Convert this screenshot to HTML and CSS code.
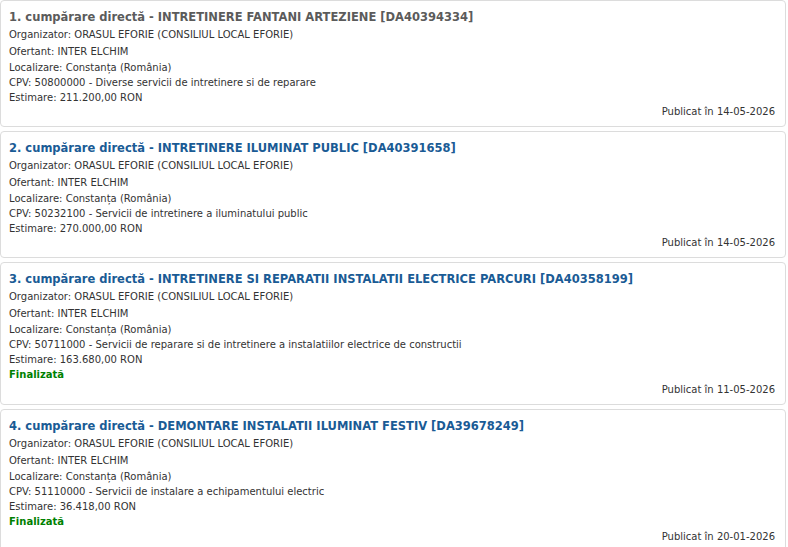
FILE: index.html
```html
<!DOCTYPE html>
<html lang="ro">
<head>
<meta charset="utf-8">
<title>Achiziții directe</title>
<link rel="stylesheet" href="styles.css">
</head>
<body>
<div class="results">
  <div class="item">
    <a class="item-title visited" href="#">1. cumpărare directă - INTRETINERE FANTANI ARTEZIENE [DA40394334]</a>
    <div class="line tall">Organizator: ORASUL EFORIE (CONSILIUL LOCAL EFORIE)</div>
    <div class="line tall">Ofertant: INTER ELCHIM</div>
    <div class="line">Localizare: Constanța (România)</div>
    <div class="line">CPV: 50800000 - Diverse servicii de intretinere si de reparare</div>
    <div class="line">Estimare: 211.200,00 RON</div>
    <div class="line date">Publicat în 14-05-2026</div>
  </div>
  <div class="item">
    <a class="item-title" href="#">2. cumpărare directă - INTRETINERE ILUMINAT PUBLIC [DA40391658]</a>
    <div class="line tall">Organizator: ORASUL EFORIE (CONSILIUL LOCAL EFORIE)</div>
    <div class="line tall">Ofertant: INTER ELCHIM</div>
    <div class="line">Localizare: Constanța (România)</div>
    <div class="line">CPV: 50232100 - Servicii de intretinere a iluminatului public</div>
    <div class="line">Estimare: 270.000,00 RON</div>
    <div class="line date">Publicat în 14-05-2026</div>
  </div>
  <div class="item">
    <a class="item-title" href="#">3. cumpărare directă - INTRETINERE SI REPARATII INSTALATII ELECTRICE PARCURI [DA40358199]</a>
    <div class="line tall">Organizator: ORASUL EFORIE (CONSILIUL LOCAL EFORIE)</div>
    <div class="line tall">Ofertant: INTER ELCHIM</div>
    <div class="line">Localizare: Constanța (România)</div>
    <div class="line">CPV: 50711000 - Servicii de reparare si de intretinere a instalatiilor electrice de constructii</div>
    <div class="line">Estimare: 163.680,00 RON</div>
    <div class="line status">Finalizată</div>
    <div class="line date">Publicat în 11-05-2026</div>
  </div>
  <div class="item">
    <a class="item-title" href="#">4. cumpărare directă - DEMONTARE INSTALATII ILUMINAT FESTIV [DA39678249]</a>
    <div class="line tall">Organizator: ORASUL EFORIE (CONSILIUL LOCAL EFORIE)</div>
    <div class="line tall">Ofertant: INTER ELCHIM</div>
    <div class="line">Localizare: Constanța (România)</div>
    <div class="line">CPV: 51110000 - Servicii de instalare a echipamentului electric</div>
    <div class="line">Estimare: 36.418,00 RON</div>
    <div class="line status">Finalizată</div>
    <div class="line date">Publicat în 20-01-2026</div>
  </div>
</div>
</body>
</html>
```

FILE: styles.css
```css
html, body {
  margin: 0;
  padding: 0;
  background: #fff;
}

body {
  font-family: "DejaVu Sans", Verdana, sans-serif;
  font-size: 10px;
  color: #333;
}

.results {
  width: 786px;
}

.item {
  border: 1px solid #dcdcdc;
  border-radius: 4px;
  padding: 8px 10px 7px 8px;
  margin-bottom: 4px;
}

.item-title {
  display: block;
  font-size: 11.5px;
  font-weight: bold;
  line-height: 17px;
  color: #1a5b95;
  text-decoration: none;
}

.item-title.visited {
  color: #5b5b5b;
}

.line {
  line-height: 15px;
}

.line.tall {
  line-height: 17px;
}

.line.status {
  line-height: 16px;
  color: #008000;
  font-weight: bold;
}

.line.date {
  line-height: 14px;
  text-align: right;
}
```
